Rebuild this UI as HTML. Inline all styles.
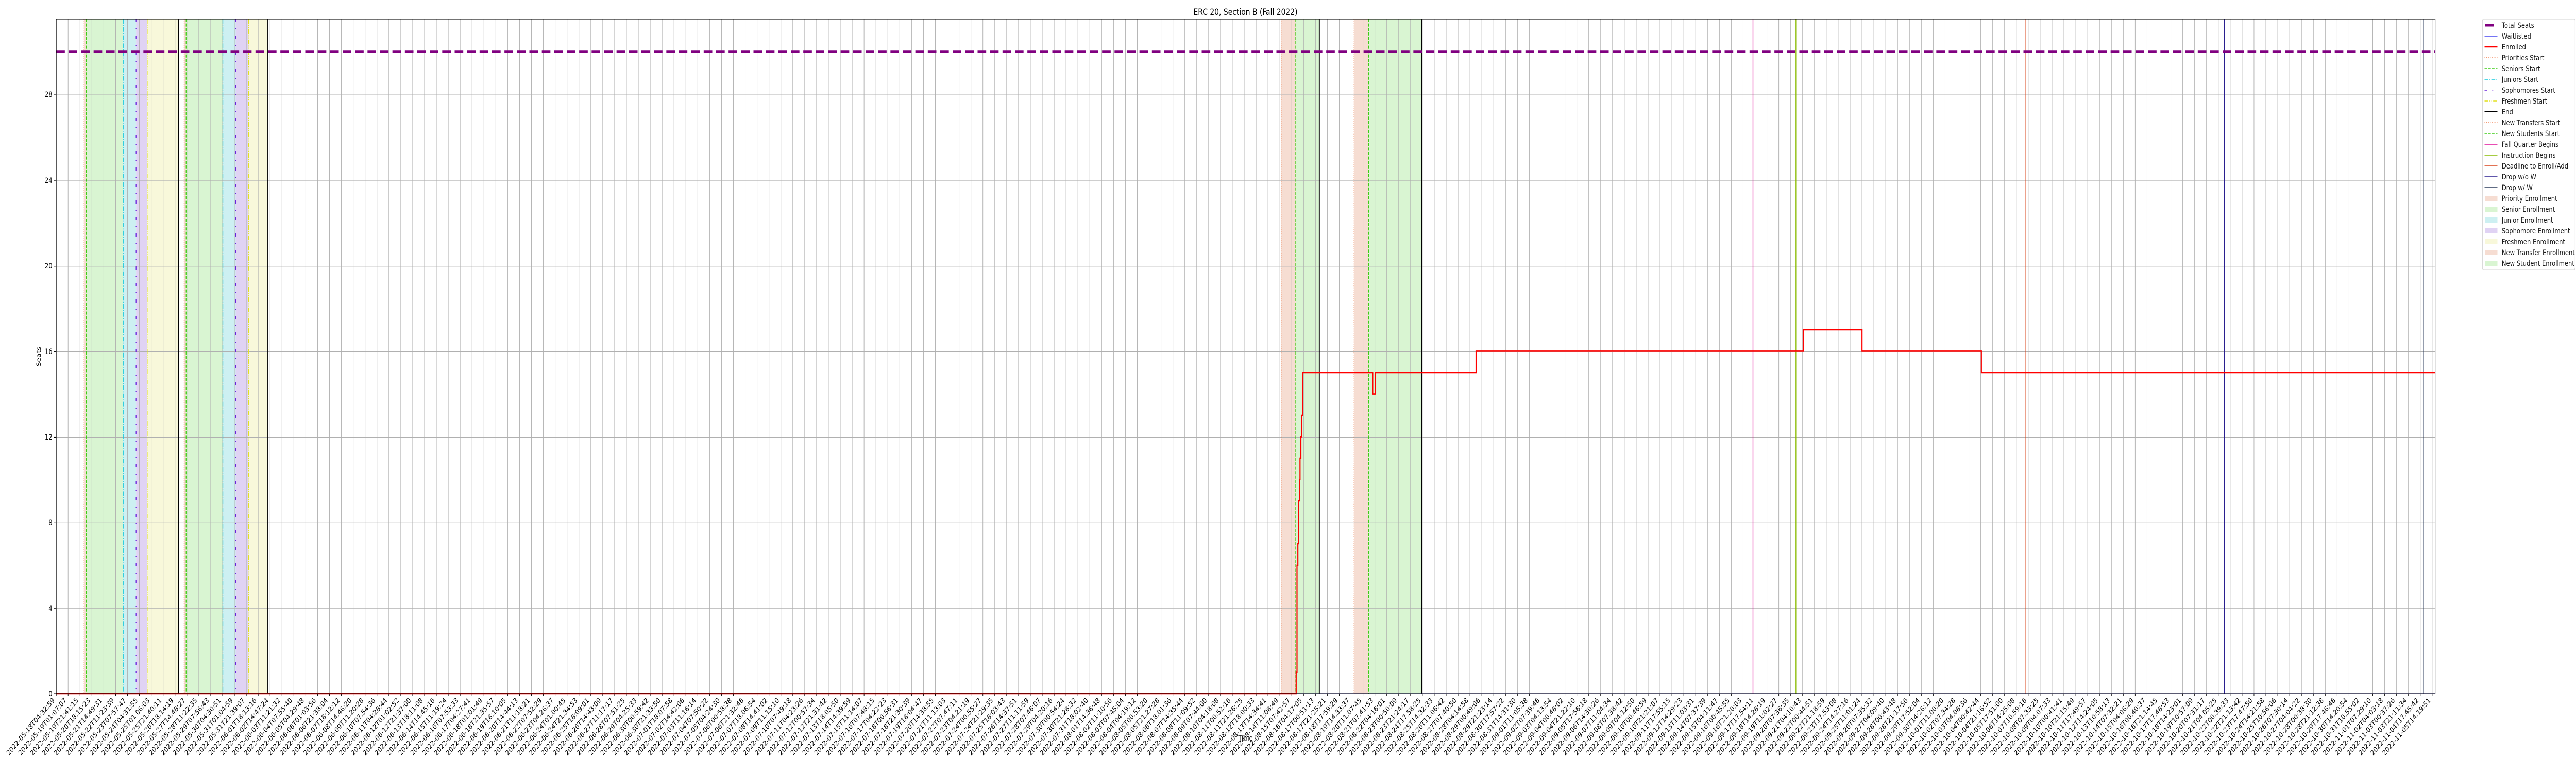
<!DOCTYPE html>
<html><head><meta charset="utf-8"><style>
html,body{margin:0;padding:0;background:#fff;width:100vw;height:100vh;overflow:hidden;}
svg{display:block;width:100vw;height:100vh;font-family:"DejaVu Sans","Liberation Sans",sans-serif;}
</style></head><body>
<svg id="s" viewBox="0 0 6000 1500" preserveAspectRatio="none" xmlns="http://www.w3.org/2000/svg">
<rect width="6000" height="1500" fill="#fff"/>
<text x="2901" y="29" font-size="16.7" text-anchor="middle" fill="#000">ERC 20, Section B (Fall 2022)</text>
<g>
<rect x="196" y="37" width="5" height="1309" fill="#f6ddd2"/>
<rect x="201" y="37" width="86" height="1309" fill="#d9f5d2"/>
<rect x="287" y="37" width="30" height="1309" fill="#cdf0f2"/>
<rect x="317" y="37" width="26" height="1309" fill="#e0d3f4"/>
<rect x="343" y="37" width="73" height="1309" fill="#f8f8da"/>
<rect x="429" y="37" width="4.5" height="1309" fill="#f6ddd2"/>
<rect x="433.5" y="37" width="85.5" height="1309" fill="#d9f5d2"/>
<rect x="519" y="37" width="30" height="1309" fill="#cdf0f2"/>
<rect x="549" y="37" width="30" height="1309" fill="#e0d3f4"/>
<rect x="579" y="37" width="45" height="1309" fill="#f8f8da"/>
<rect x="2984" y="37" width="34" height="1309" fill="#f6ddd2"/>
<rect x="3018" y="37" width="55" height="1309" fill="#d9f5d2"/>
<rect x="3154" y="37" width="34" height="1309" fill="#f6ddd2"/>
<rect x="3188" y="37" width="123" height="1309" fill="#d9f5d2"/>
</g>
<g id="grid" stroke="#b0b0b0" stroke-width="1.1"></g>
<g stroke="#b0b0b0" stroke-width="1.1">
<line x1="131" x2="5672" y1="1180.2" y2="1180.2"/><line x1="131" x2="5672" y1="1014.3" y2="1014.3"/>
<line x1="131" x2="5672" y1="848.5" y2="848.5"/><line x1="131" x2="5672" y1="682.6" y2="682.6"/>
<line x1="131" x2="5672" y1="516.8" y2="516.8"/><line x1="131" x2="5672" y1="350.9" y2="350.9"/>
<line x1="131" x2="5672" y1="183" y2="183"/>
</g>
<g stroke-width="1.6" fill="none">
<line x1="196" x2="196" y1="37" y2="1346" stroke="#f0703a" stroke-dasharray="1.6 2.6"/>
<line x1="201" x2="201" y1="37" y2="1346" stroke="#3ccc14" stroke-dasharray="6 2.6"/>
<line x1="287" x2="287" y1="37" y2="1346" stroke="#14c8dc" stroke-dasharray="9 2.6 1.6 2.6"/>
<line x1="317" x2="317" y1="37" y2="1346" stroke="#6a22dc" stroke-dasharray="6 12 2 12"/>
<line x1="343" x2="343" y1="37" y2="1346" stroke="#e2e020" stroke-dasharray="9 2.6 1.6 2.6 1.6 2.6"/>
<line x1="429" x2="429" y1="37" y2="1346" stroke="#f0703a" stroke-dasharray="1.6 2.6"/>
<line x1="433.5" x2="433.5" y1="37" y2="1346" stroke="#3ccc14" stroke-dasharray="6 2.6"/>
<line x1="519" x2="519" y1="37" y2="1346" stroke="#14c8dc" stroke-dasharray="9 2.6 1.6 2.6"/>
<line x1="549" x2="549" y1="37" y2="1346" stroke="#6a22dc" stroke-dasharray="6 12 2 12"/>
<line x1="579" x2="579" y1="37" y2="1346" stroke="#e2e020" stroke-dasharray="9 2.6 1.6 2.6 1.6 2.6"/>
<line x1="2984" x2="2984" y1="37" y2="1346" stroke="#f0703a" stroke-dasharray="1.6 2.6"/>
<line x1="3018" x2="3018" y1="37" y2="1346" stroke="#3ccc14" stroke-dasharray="6 2.6"/>
<line x1="3154" x2="3154" y1="37" y2="1346" stroke="#f0703a" stroke-dasharray="1.6 2.6"/>
<line x1="3188" x2="3188" y1="37" y2="1346" stroke="#3ccc14" stroke-dasharray="6 2.6"/>
<line x1="4083" x2="4083" y1="37" y2="1346" stroke="#e0109a"/>
<line x1="4183" x2="4183" y1="37" y2="1346" stroke="#88bb00"/>
<line x1="4717" x2="4717" y1="37" y2="1346" stroke="#d9431a"/>
<line x1="5181" x2="5181" y1="37" y2="1346" stroke="#2a1f8f"/>
<line x1="5645" x2="5645" y1="37" y2="1346" stroke="#2a3a5a"/>
</g>
<g stroke="#000" stroke-width="2.2">
<line x1="416" x2="416" y1="37" y2="1346"/><line x1="624" x2="624" y1="37" y2="1346"/>
<line x1="3073" x2="3073" y1="37" y2="1346"/><line x1="3311" x2="3311" y1="37" y2="1346"/>
</g>
<line x1="131" x2="5672" y1="99.8" y2="99.8" stroke="#800080" stroke-width="5" stroke-dasharray="20 9"/>
<line x1="131" x2="5672" y1="1346" y2="1346" stroke="#2020ee" stroke-width="1.3"/>
<path fill="none" stroke="#ff0000" stroke-width="2.6" d="M131,1346 H3019 V1304.5 H3021 V1097 H3023 V1055 H3025 V972 H3027 V930.6 H3028 V889 H3030 V847.5 H3032 V806 H3034.7 V723 H3197.3 V764.6 H3203.3 V723 H3438 V681.4 H4200 V639.9 H4337 V681.4 H4615 V723 H5672"/>
<rect x="131" y="37" width="5541" height="1309" fill="none" stroke="#000" stroke-width="1.1"/>
<g font-size="13.9" text-anchor="end" fill="#000">
<g stroke="#000" stroke-width="1.1">
<line x1="126" x2="131" y1="1346" y2="1346"/><line x1="126" x2="131" y1="1180.2" y2="1180.2"/>
<line x1="126" x2="131" y1="1014.3" y2="1014.3"/><line x1="126" x2="131" y1="848.5" y2="848.5"/>
<line x1="126" x2="131" y1="682.6" y2="682.6"/><line x1="126" x2="131" y1="516.8" y2="516.8"/>
<line x1="126" x2="131" y1="350.9" y2="350.9"/><line x1="126" x2="131" y1="183" y2="183"/>
</g>
<text x="122" y="1351">0</text><text x="122" y="1185">4</text><text x="122" y="1019">8</text>
<text x="122" y="853">12</text><text x="122" y="687">16</text><text x="122" y="521">20</text>
<text x="122" y="355">24</text><text x="122" y="188">28</text>
</g>
<text x="95" y="692" font-size="13.9" text-anchor="middle" transform="rotate(-90 95 692)">Seats</text>
<text x="2901" y="1437" font-size="13.9" text-anchor="middle">Time</text>
<g id="xt" font-size="13.9" text-anchor="end" fill="#000"></g>
<rect x="5782" y="37" width="216" height="486" rx="3" fill="#fff" stroke="#d0d0d0" stroke-width="1.1"/>
<g font-size="13.9" fill="#1a1a1a">
<text x="5827" y="54">Total Seats</text>
<text x="5827" y="75">Waitlisted</text>
<text x="5827" y="96">Enrolled</text>
<text x="5827" y="117">Priorities Start</text>
<text x="5827" y="138">Seniors Start</text>
<text x="5827" y="159">Juniors Start</text>
<text x="5827" y="180">Sophomores Start</text>
<text x="5827" y="201">Freshmen Start</text>
<text x="5827" y="222">End</text>
<text x="5827" y="243">New Transfers Start</text>
<text x="5827" y="264">New Students Start</text>
<text x="5827" y="285">Fall Quarter Begins</text>
<text x="5827" y="306">Instruction Begins</text>
<text x="5827" y="327">Deadline to Enroll/Add</text>
<text x="5827" y="348">Drop w/o W</text>
<text x="5827" y="369">Drop w/ W</text>
<text x="5827" y="390">Priority Enrollment</text>
<text x="5827" y="411">Senior Enrollment</text>
<text x="5827" y="432">Junior Enrollment</text>
<text x="5827" y="453">Sophomore Enrollment</text>
<text x="5827" y="474">Freshmen Enrollment</text>
<text x="5827" y="495">New Transfer Enrollment</text>
<text x="5827" y="516">New Student Enrollment</text>
</g>
<g fill="none" stroke-width="1.6">
<line x1="5788" x2="5808" y1="49" y2="49" stroke="#800080" stroke-width="5"/>
<line x1="5787" x2="5817" y1="70" y2="70" stroke="#2020ee" stroke-width="1.3"/>
<line x1="5787" x2="5817" y1="91" y2="91" stroke="#ff0000" stroke-width="2.6"/>
<line x1="5787" x2="5817" y1="112" y2="112" stroke="#f0703a" stroke-dasharray="1.6 2.6"/>
<line x1="5787" x2="5817" y1="133" y2="133" stroke="#3ccc14" stroke-dasharray="6 2.6"/>
<line x1="5787" x2="5817" y1="154" y2="154" stroke="#14c8dc" stroke-dasharray="9 2.6 1.6 2.6"/>
<line x1="5787" x2="5817" y1="175" y2="175" stroke="#6a22dc" stroke-dasharray="6 12 2 12"/>
<line x1="5787" x2="5817" y1="196" y2="196" stroke="#e2e020" stroke-dasharray="9 2.6 1.6 2.6 1.6 2.6"/>
<line x1="5787" x2="5817" y1="217" y2="217" stroke="#000" stroke-width="2"/>
<line x1="5787" x2="5817" y1="238" y2="238" stroke="#f0703a" stroke-dasharray="1.6 2.6"/>
<line x1="5787" x2="5817" y1="259" y2="259" stroke="#3ccc14" stroke-dasharray="6 2.6"/>
<line x1="5787" x2="5817" y1="280" y2="280" stroke="#e0109a"/>
<line x1="5787" x2="5817" y1="301" y2="301" stroke="#88bb00"/>
<line x1="5787" x2="5817" y1="322" y2="322" stroke="#d9431a"/>
<line x1="5787" x2="5817" y1="343" y2="343" stroke="#2a1f8f"/>
<line x1="5787" x2="5817" y1="364" y2="364" stroke="#2a3a5a"/>
</g>
<g>
<rect x="5788" y="380" width="29" height="10" fill="#f6ddd2"/>
<rect x="5788" y="401" width="29" height="10" fill="#d9f5d2"/>
<rect x="5788" y="422" width="29" height="10" fill="#cdf0f2"/>
<rect x="5788" y="443" width="29" height="10" fill="#e0d3f4"/>
<rect x="5788" y="464" width="29" height="10" fill="#f8f8da"/>
<rect x="5788" y="485" width="29" height="10" fill="#f6ddd2"/>
<rect x="5788" y="506" width="29" height="10" fill="#d9f5d2"/>
</g>
</svg>
<script>
(function(){
var NS="http://www.w3.org/2000/svg";
var g=document.getElementById("grid"),xt=document.getElementById("xt");
var t0=Date.UTC(2022,4,18,4,32,59),t1=Date.UTC(2022,10,5,14,19,51);
function p(n){return (n<10?"0":"")+n;}
for(var i=0;i<=200;i++){
 var x=131+i*(5534/200);
 var l=document.createElementNS(NS,"line");
 l.setAttribute("x1",x);l.setAttribute("x2",x);l.setAttribute("y1",37);l.setAttribute("y2",1346);
 g.appendChild(l);
 var tk=document.createElementNS(NS,"line");
 tk.setAttribute("x1",x);tk.setAttribute("x2",x);tk.setAttribute("y1",1346);tk.setAttribute("y2",1351);
 tk.setAttribute("stroke","#000");tk.setAttribute("stroke-width","1.1");xt.appendChild(tk);
 var d=new Date(t0+(t1-t0)*i/200);
 var s=d.getUTCFullYear()+"-"+p(d.getUTCMonth()+1)+"-"+p(d.getUTCDate())+"T"+p(d.getUTCHours())+":"+p(d.getUTCMinutes())+":"+p(d.getUTCSeconds());
 var t=document.createElementNS(NS,"text");
 var px=x-3,py=1360;
 t.setAttribute("x",px);t.setAttribute("y",py);
 t.setAttribute("transform","rotate(-45 "+px+" "+py+")");
 t.textContent=s;xt.appendChild(t);
}
})();
</script>
</body></html>
